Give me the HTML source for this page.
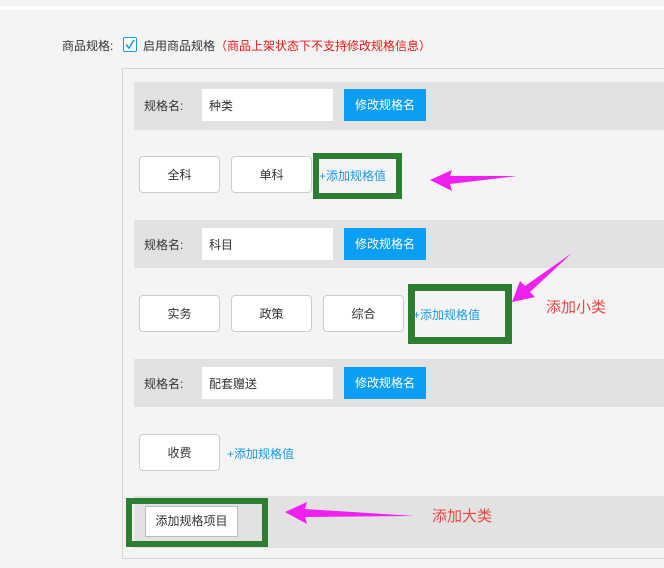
<!DOCTYPE html>
<html><head><meta charset="utf-8"><style>
*{margin:0;padding:0;box-sizing:border-box}
body{width:664px;height:568px;background:#f4f4f4;position:relative;overflow:hidden;font-family:"Liberation Sans","Noto Sans CJK SC",sans-serif;font-size:12px;color:#333}
.a{position:absolute}
.hdr{left:134px;right:0;height:48px;background:#e2e2e2}
.inp{background:#fff;width:131px;height:32px;padding:8px 7px;font-size:12px}
.btn{background:#0a9ef5;color:#fff;width:82px;height:32px;line-height:32px;text-align:center}
.val{background:#fff;border:1px solid #ccc;border-radius:4px;width:81px;height:37px;line-height:36px;text-align:center}
.link{color:#1a9af0}
.gb{border:6px solid #2e7d32}
.red{color:#f04444;font-size:15px}
</style></head><body>
<div class="a" style="left:0;top:6px;width:664px;height:4px;background:#fff"></div>
<div class="a" style="left:62px;top:37px">商品规格:</div>
<svg class="a" style="left:123px;top:37px" width="14" height="15"><rect x="0.5" y="0.5" width="13" height="14" rx="1.5" fill="#fff" stroke="#1a9af0"/><path d="M3 7.5 L6 11 L11 3" fill="none" stroke="#1a9af0" stroke-width="1.6"/></svg>
<div class="a" style="left:143px;top:37px">启用商品规格<span style="color:#f01818">（商品上架状态下不支持修改规格信息）</span></div>
<div class="a" style="left:122px;top:68px;width:560px;height:491px;border:1px solid #d4d4d4"></div>

<div class="a hdr" style="top:82px"></div>
<div class="a" style="left:144px;top:97px">规格名:</div>
<div class="a inp" style="left:202px;top:89px">种类</div>
<div class="a btn" style="left:344px;top:89px">修改规格名</div>
<div class="a val" style="left:139px;top:156px">全科</div>
<div class="a val" style="left:231px;top:156px">单科</div>
<div class="a gb" style="left:313px;top:153px;width:89px;height:46px"></div>
<div class="a link" style="left:319px;top:167px">+添加规格值</div>

<div class="a hdr" style="top:220px"></div>
<div class="a" style="left:144px;top:236px">规格名:</div>
<div class="a inp" style="left:202px;top:228px">科目</div>
<div class="a btn" style="left:344px;top:228px">修改规格名</div>
<div class="a val" style="left:139px;top:295px">实务</div>
<div class="a val" style="left:231px;top:295px">政策</div>
<div class="a val" style="left:323px;top:295px">综合</div>
<div class="a gb" style="left:408px;top:284px;width:104px;height:60px;border-width:7px"></div>
<div class="a link" style="left:413px;top:306px">+添加规格值</div>

<div class="a hdr" style="top:359px"></div>
<div class="a" style="left:144px;top:375px">规格名:</div>
<div class="a inp" style="left:202px;top:367px">配套赠送</div>
<div class="a btn" style="left:344px;top:367px">修改规格名</div>
<div class="a val" style="left:139px;top:434px">收费</div>
<div class="a link" style="left:227px;top:445px">+添加规格值</div>

<div class="a" style="left:134px;top:496px;right:0;height:52px;background:#e2e2e2"></div>
<div class="a gb" style="left:126px;top:498px;width:142px;height:49px"></div>
<div class="a" style="left:145px;top:506px;width:93px;height:31px;background:#fff;border:1px solid #bbb;line-height:29px;text-align:center">添加规格项目</div>

<div class="a red" style="left:546px;top:296px">添加小类</div>
<div class="a red" style="left:432px;top:505px">添加大类</div>
<svg class="a" style="left:0;top:0" width="664" height="568">
<polygon fill="#f020f0" points="430,180 452,170 450,176 517,176 450,184 452,191"/>
<polygon fill="#f020f0" points="512,302 520,281 525,286 572,253 530,292 535,297"/>
<polygon fill="#f020f0" points="285,512 307,502 305,509 415,516 305,517 307,524"/>
</svg>
</body></html>
